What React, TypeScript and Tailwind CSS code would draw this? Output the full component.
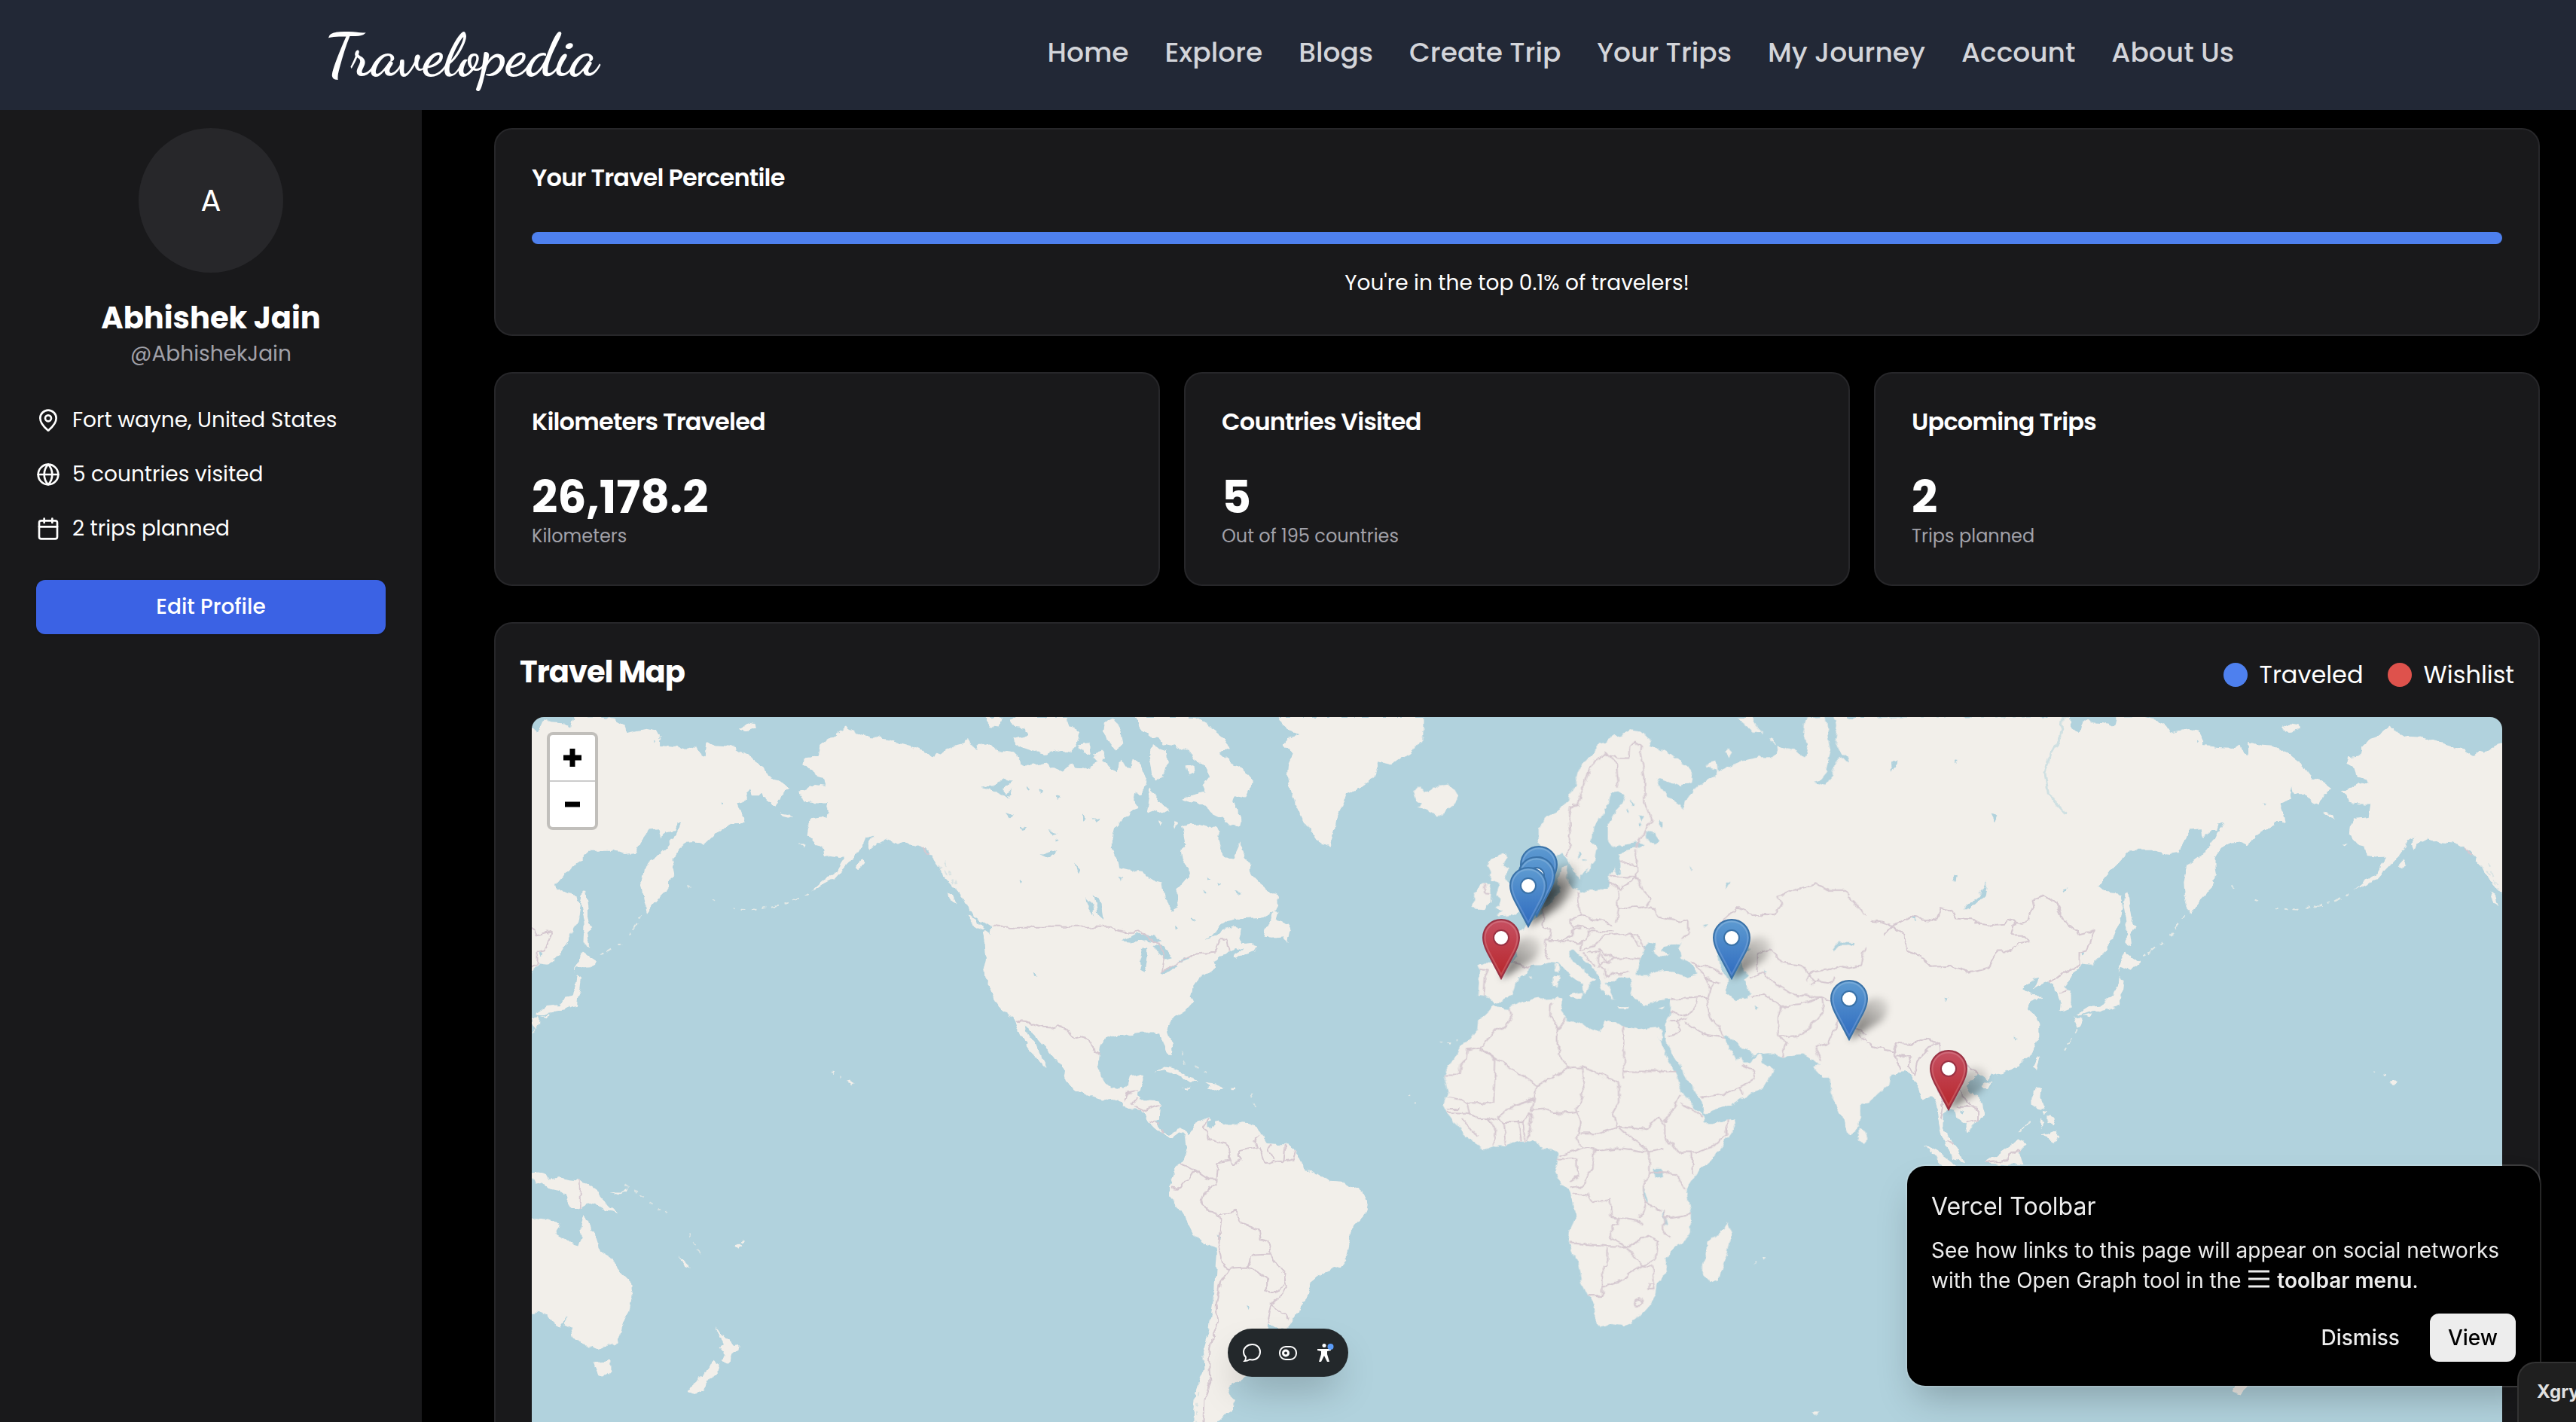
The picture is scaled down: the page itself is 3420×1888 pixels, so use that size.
import { Calendar, Globe, MapPin } from "lucide-react";

const navLinks = ["Home", "Explore", "Blogs", "Create Trip", "Your Trips", "My Journey", "Account", "About Us"];

const profileFacts = [
  { icon: MapPin, text: "Fort wayne, United States" },
  { icon: Globe, text: "5 countries visited" },
  { icon: Calendar, text: "2 trips planned" },
];

const stats = [
  { title: "Kilometers Traveled", value: "26,178.2", note: "Kilometers" },
  { title: "Countries Visited", value: "5", note: "Out of 195 countries" },
  { title: "Upcoming Trips", value: "2", note: "Trips planned" },
];

// tip of each pin, in map units
const pins = [
  { x: 1337, y: 251, kind: "traveled" },
  { x: 1334, y: 265, kind: "traveled" },
  { x: 1323, y: 279, kind: "traveled" },
  { x: 1287, y: 348, kind: "wishlist" },
  { x: 1593, y: 348, kind: "traveled" },
  { x: 1749, y: 429, kind: "traveled" },
  { x: 1881, y: 522, kind: "wishlist" },
];

const americasLand = [
  "M720,84 L735,90 748,95 758,100 766,106 775,97 785,100 795,92 803,88 812,78 826,74 834,66 840,82 852,90 858,80 866,86 880,82 886,90 905,96 918,98 930,112 938,122 950,126 968,124 985,122 990,130 1000,132 1012,138 1020,130 1028,124 1040,128 1050,130 1060,134 1072,128 1078,118 1070,108 1084,98 1092,104 1088,116 1100,122 1105,134 1116,140 1118,120 1126,112 1132,130 1142,132 1146,112 1158,120 1164,140 1172,156 1168,176 1160,186 1150,184 1146,200 1158,220 1140,228 1140,236 1125,246 1112,262 1106,290 1106,310 1112,326 1120,335 1122,352 1136,356 1160,360 1178,374 1190,384 1204,388 1206,404 1210,424 1222,446 1234,438 1232,414 1226,398 1240,388 1252,372 1250,350 1238,330 1236,312 1248,300 1244,282 1240,258 1256,254 1272,258 1288,264 1300,258 1308,270 1308,290 1314,312 1322,328 1334,330 1342,310 1348,295 1356,318 1366,345 1372,368 1388,386 1404,400 1418,410 1420,430 1414,448 1390,460 1350,462 1325,468 1310,480 1296,500 1282,510 1300,502 1316,490 1336,482 1350,486 1346,502 1352,518 1370,516 1386,522 1378,534 1356,542 1344,552 1338,548 1344,538 1356,530 1342,526 1330,534 1322,542 1306,546 1298,558 1302,574 1290,582 1274,586 1268,600 1258,616 1254,634 1258,648 1246,664 1232,674 1218,686 1212,700 1214,716 1222,742 1222,762 1214,764 1206,750 1200,730 1196,716 1184,712 1168,712 1150,714 1142,722 1128,718 1112,718 1096,726 1084,740 1082,756 1080,784 1084,806 1094,824 1104,834 1118,838 1130,834 1138,826 1142,810 1160,804 1168,806 1164,820 1158,836 1156,850 1160,862 1176,862 1192,864 1198,872 1196,892 1196,904 1188,908 1196,920 1202,930 1216,936 1224,928 1236,924 1246,932 1250,938 1256,928 1262,912 1274,906 1290,898 1294,902 1288,912 1296,924 1302,908 1310,904 1320,914 1340,914 1352,910 1368,912 1378,920 1384,932 1394,940 1404,956 1426,958 1440,958 1452,968 1460,984 1466,998 1468,1012 1486,1016 1512,1032 1521,1040 1546,1042 1566,1054 1585,1062 1591,1085 1585,1110 1572,1128 1559,1144 1556,1175 1551,1205 1539,1228 1521,1234 1497,1246 1484,1258 1480,1275 1478,1292 1466,1308 1456,1330 1446,1348 1436,1362 1420,1362 1402,1352 1398,1356 1412,1376 1410,1394 1395,1404 1376,1406 1376,1430 1368,1460 1345,1478 1328,1488 1326,1504 1340,1520 1336,1540 1320,1552 1308,1568 1310,1700 1255,1700 1262,1540 1265,1500 1272,1480 1282,1450 1280,1410 1290,1370 1294,1330 1300,1290 1302,1240 1304,1200 1302,1186 1286,1176 1262,1158 1254,1140 1244,1118 1230,1092 1216,1072 1216,1056 1222,1046 1218,1034 1224,1012 1236,1000 1244,986 1248,966 1246,946 1240,934 1232,932 1220,942 1206,936 1194,928 1186,920 1178,910 1170,890 1158,882 1146,878 1130,874 1124,866 1108,860 1090,862 1064,852 1040,840 1020,822 1016,808 1018,798 1006,780 992,760 978,744 966,728 960,712 950,704 942,698 944,712 954,728 964,744 972,760 980,774 986,788 978,786 966,770 950,750 944,744 946,734 934,722 926,700 922,682 906,670 896,662 886,644 878,620 866,598 864,570 868,550 866,510 862,492 868,488 878,496 876,480 862,470 846,456 836,446 830,430 816,408 806,392 790,372 780,350 768,330 756,312 740,302 720,296Z",
  // northern islands
  "M1150,20 L1262,20 1280,34 1300,48 1320,66 1330,90 1312,100 1330,118 1350,130 1374,160 1366,180 1356,198 1340,192 1336,206 1348,228 1350,262 1330,258 1314,240 1296,230 1280,212 1256,208 1240,200 1262,190 1284,184 1278,168 1290,150 1280,128 1262,110 1248,88 1236,92 1220,84 1204,80 1196,66 1180,64 1165,50 1156,36Z",
  "M925,82 L920,66 948,58 940,44 918,40 912,26 930,20 1020,20 1026,40 1046,52 1040,82 1030,96 1012,92 996,96 984,102 962,96 950,92Z",
  "M866,20 L898,20 892,42 878,40Z M1095,30 L1110,22 1124,50 1128,80 1112,92 1098,70 1092,50Z M1044,84 L1062,76 1066,98 1050,100Z M1072,98 L1088,92 1096,108 1084,112Z",
  "M1180,80 L1210,92 1212,120 1204,150 1190,160 1182,150 1180,130 1176,104Z M1178,176 L1196,206 1214,226 1200,234 1186,224 1172,230Z M1248,124 L1262,124 1264,142 1252,148Z M1222,246 l10,4 -6,16z M1196,250 l8,4 -6,6z",
  "M1422,20 L1697,20 1697,74 1665,100 1636,125 1611,118 1603,150 1582,172 1549,190 1540,220 1531,240 1525,280 1519,304 1504,296 1490,284 1470,250 1450,200 1438,150 1440,124 1448,104 1440,92 1430,80 1440,66 1460,60 1436,44Z",
  "M832,454 L850,464 868,484 860,486 844,474Z M796,404 L804,410 812,434 802,424Z",
  "M1414,446 L1422,448 1418,464 1430,470 1440,478 1444,492 1440,514 1428,502 1410,504 1392,502 1400,480 1408,462Z",
  "M1186,800 L1206,788 1222,790 1240,800 1256,812 1270,820 1256,822 1240,810 1220,802 1204,796Z M1282,822 L1300,824 1318,832 1300,840 1284,836 1290,830Z M1238,836 L1254,838 1250,842Z M1328,835 h12 v4 h-12z",
  // oceania
  "M-300,1130 L20,1122 45,1126 62,1130 52,1152 70,1164 84,1176 96,1180 102,1160 102,1136 108,1112 118,1132 120,1148 130,1158 136,1180 142,1196 158,1206 166,1224 180,1240 194,1256 199,1290 194,1320 184,1342 176,1370 170,1394 150,1400 132,1406 120,1400 104,1400 88,1382 84,1362 72,1356 74,1338 62,1358 50,1350 40,1334 20,1326 -300,1326Z",
  "M126,1436 L142,1434 156,1434 156,1456 146,1468 136,1466Z",
  "M356,1358 L372,1378 388,1398 400,1396 398,1410 388,1420 378,1440 368,1434 372,1416 364,1404 372,1396Z M352,1432 L366,1442 358,1460 344,1478 334,1496 322,1508 304,1502 312,1488 330,1468 344,1450Z",
  "M0,1020 L20,1018 38,1024 44,1036 60,1030 80,1036 98,1038 120,1048 136,1062 140,1076 156,1096 172,1112 150,1104 130,1090 118,1086 100,1098 84,1096 74,1088 78,1076 60,1060 44,1056 30,1042 14,1046 10,1034Z M158,1066 L176,1066 190,1056 194,1048 188,1062 172,1072Z",
  "M284,1206 L296,1214 308,1228 298,1224Z M392,1180 l8,-3 4,6 -6,6z M402,1172 l8,-6 2,4 -8,6z M606,820 l6,-2 6,6 -5,5z M592,806 l4,2 -3,2z M576,798 l5,1 -3,3z",
].join(" ");

const americasBorders =
  "M878,481 H1102 L1130,493 1160,492 1190,515 1205,545 1200,578 1230,562 1265,540 1300,537 1312,508 1325,508 1328,535 M925,686 L945,688 970,700 990,702 1005,696 1020,706 1035,725 1050,720 1065,735 1075,755 1083,760 M1128,862 L1134,844 1156,840 M1145,870 L1154,856 M1148,874 L1170,885 1196,872 M1180,908 L1196,912 M1202,922 V934 M1290,900 L1280,920 1290,945 1308,952 1325,955 1328,995 1308,1000 1305,1035 1290,1034 1265,1015 1236,1000 M1265,1015 L1254,1036 1240,1042 1230,1058 1220,1056 M1305,1035 L1305,1050 1280,1062 1275,1085 1285,1104 1305,1108 1305,1115 M1325,975 L1335,1004 1350,990 1350,972 1380,965 1376,950 1384,936 M1385,965 L1395,1000 1412,994 1430,996 1450,990 1454,972 M1410,958 L1403,974 1414,990 M1435,960 L1432,994 M1305,1115 L1342,1106 1350,1130 1385,1145 1388,1165 1402,1170 1405,1200 1370,1202 1365,1228 1325,1230 M1305,1115 L1315,1125 1308,1185 1318,1225 1328,1232 1312,1260 1304,1310 1306,1350 1296,1380 1290,1420 1292,1480 1282,1520 1280,1600 M1365,1228 L1400,1252 1400,1278 1412,1282 1435,1265 M1405,1200 L1420,1228 1434,1245 1438,1270 1408,1310 1440,1340 M1408,1310 L1400,1350 M98,1038 V1098";

const americasLakes =
  "M1126,512 L1150,496 1185,500 1198,516 1170,510 1150,515Z M1166,530 L1175,528 1172,560 1170,580 1162,575 1160,550Z M1182,520 L1205,525 1220,548 1207,552 1195,540Z M1198,580 L1228,562 1232,570 1205,582Z M1230,555 L1252,549 1250,556 1235,560Z M1070,408 L1085,425 1090,462 1078,450 1075,430Z M1058,415 L1068,432 1072,460 1062,440Z M862,175 L886,170 900,155 918,160 900,180 912,200 890,186Z M905,192 L918,176 914,194Z M970,322 L1000,312 1006,316 985,330Z M1032,340 L1046,356 1042,366Z M956,582 l6,2 2,8 -6,-4z M988,268 l14,4 -8,5z M905,230 l16,6 -8,6z M1050,235 l10,10 -6,6z M1070,238 l14,6 -8,6z M936,260 l8,4 -6,4z M1000,285 l6,4 -6,3z M1285,370 l8,8 -6,4z M1306,384 l8,4 -6,4z M1278,400 l10,4 -8,3z M1340,402 l12,2 -6,4z M1226,478 l6,5 -5,4z M1256,462 l10,3 -6,3z M932,380 l8,2 -5,4z M1120,370 l8,3 -5,4z M970,180 l8,6 -6,3z M948,170 l6,8 -6,2z M1000,190 l8,4 -6,6z M1288,906 l6,4 -1,16 -5,-6z M1360,1312 l8,2 -4,6z M1308,1156 l5,8 -3,4z";

const oldWorldLand = [
  "M510,262 L530,240 560,225 580,200 595,170 600,140 615,120 635,100 650,80 670,70 700,60 722,48 745,52 768,68 762,80 785,88 815,102 850,128 868,145 862,165 840,174 810,162 785,155 795,175 805,195 820,200 838,212 840,225 852,205 862,190 880,170 900,160 918,150 922,135 900,130 905,118 920,115 925,140 950,128 975,118 1000,112 1020,108 1050,108 1062,98 1060,82 1080,85 1105,95 1125,110 1135,100 1128,80 1122,50 1130,22 1175,20 1180,60 1186,90 1176,140 1160,158 1145,162 1175,170 1188,150 1195,120 1210,105 1225,120 1228,105 1205,95 1195,70 1200,40 1192,20 L1345,20 1345,800 1325,802 1320,825 1295,845 1275,865 1254,870 1254,905 1242,930 1228,936 1215,905 1198,870 1186,840 1184,810 1165,810 1145,790 1158,785 1140,770 1120,762 1075,766 1040,758 1020,760 1005,765 1000,752 975,745 960,730 945,715 938,718 948,740 960,758 968,775 975,765 980,780 1000,780 1012,765 1022,762 1030,780 1052,795 1040,820 1020,838 990,855 960,870 925,880 892,892 886,865 870,840 850,815 840,790 825,770 810,745 805,722 803,700 812,680 816,655 814,640 790,642 770,650 745,648 725,632 728,615 722,605 720,590 740,588 760,588 790,578 820,578 850,590 875,585 868,568 840,550 835,530 840,515 825,520 800,525 790,532 815,540 800,548 785,545 772,535 780,520 765,515 755,525 748,545 740,565 738,582 745,588 720,592 700,590 690,600 665,600 670,610 685,640 665,628 655,612 652,595 640,575 625,560 605,545 590,530 582,535 588,550 605,570 625,585 640,598 625,600 628,618 615,628 612,605 590,590 570,575 555,560 540,558 515,565 490,565 485,580 462,595 455,615 450,628 435,638 405,650 395,635 370,632 372,600 375,575 370,565 385,558 420,560 450,560 458,545 455,525 440,505 430,498 450,490 465,492 480,478 500,465 520,455 522,440 540,425 560,405 555,375 562,350 578,345 575,372 590,395 610,402 640,400 668,398 672,370 685,350 692,365 702,362 700,340 695,318 735,310 755,300 745,296 710,300 682,305 670,290 670,255 690,225 705,210 710,195 695,183 680,185 670,215 655,235 635,260 632,290 645,305 640,330 622,352 605,375 592,360 578,335 565,318 545,330 520,318 510,290Z",
  "M430,318 L440,330 425,345 440,350 435,370 450,395 460,415 468,425 475,440 450,455 415,458 425,445 410,440 425,420 410,410 418,385 398,380 400,360 392,345 405,330Z M375,390 L395,388 400,400 398,430 380,442 360,440 365,420 360,405Z",
  "M220,185 L232,172 245,185 262,178 275,170 300,168 315,178 325,195 312,215 290,228 272,234 250,222 230,218 240,208 225,200Z",
  "M970,20 L1005,20 1018,45 1028,58 1010,55 985,35Z M938,98 l10,-8 8,8 -8,12z M1042,68 l10,2 6,12 -10,-6z",
  "M580,628 L612,622 608,640 585,636Z M545,588 L556,590 552,612 543,610Z M547,562 L554,562 553,582 547,580Z M692,655 h26 v5 h-22z M785,660 l18,-5 -6,9z M484,592 l8,-3 -3,7z M620,360 l6,-14 3,3 -6,14z",
  "M405,655 L440,658 470,645 510,638 550,636 565,640 560,665 575,685 600,690 625,700 650,712 665,690 690,690 705,700 740,705 765,702 790,700 800,722 794,734 785,722 800,750 815,780 830,810 845,850 865,870 888,892 895,905 890,912 915,912 945,905 968,900 960,925 935,960 905,995 880,1015 862,1040 850,1060 855,1085 862,1110 862,1150 845,1175 825,1185 805,1205 810,1240 785,1260 782,1285 760,1320 735,1345 705,1355 680,1352 655,1362 640,1345 640,1325 625,1290 610,1260 605,1225 590,1195 578,1175 582,1145 597,1115 590,1085 582,1062 565,1045 548,1020 555,1000 558,980 545,970 520,970 510,955 495,952 465,950 430,962 410,962 385,970 360,955 335,935 320,915 300,890 290,872 300,845 292,805 310,775 330,745 350,728 368,705 370,685 390,670Z",
  "M948,1128 L958,1155 945,1200 928,1255 908,1262 890,1245 890,1220 900,1195 900,1170 920,1160 935,1148Z M1252,920 L1262,925 1271,945 1262,955 1252,948Z",
  "M1140,1545 l18,0 -6,8z M1008,1216 l5,2 -4,3z M1028,1206 l6,0 -4,4z M210,850 l5,2 -4,4z M224,866 l5,0 -3,4z M285,732 l6,3 -4,2z M298,738 l6,-3 -2,6z M320,728 l5,3 -4,3z",
].join(" ");

const oldWorldBorders = [
  "M440,658 L447,690 410,710 375,745 M375,745 L345,750 342,770 328,785 325,805 293,805 M375,745 L505,828 580,790 M505,828 L500,860 450,875 415,900 M375,750 L410,770 406,865 345,868 M540,645 L538,675 555,700 555,760 580,790 610,788 695,822 M570,680 L555,705 M706,700 L708,815 M708,798 L828,798 M695,822 L695,865 680,890 690,920 M610,788 L615,840 598,880 605,915 598,945 M500,860 L495,885 530,882 545,890 590,888 605,885 M495,890 L485,950 M415,900 L430,910 435,960 M462,905 L470,950 M475,905 L480,950 M430,910 H475 L492,890 M300,855 L330,860 345,870 350,890 300,888 M300,880 H325 M350,890 L370,900 395,900 410,925 M330,905 L350,920 M350,918 L370,940 M395,900 L415,905 M410,925 L405,960 M605,905 L598,945 M605,935 L650,935 700,918 760,925 785,900 800,915 M600,945 L610,965 560,985 M610,965 L650,972 700,966 760,975 M700,920 L730,950 765,975 800,968 M800,915 L800,935 830,975 880,975 915,962 945,935 V905 M800,910 L825,875 840,850 M840,870 L870,880 888,900 M865,975 L865,1025 M765,975 L765,1020 825,1022 850,1055",
  "M765,1020 L752,1045 755,1085 795,1105 M640,970 L635,1010 610,1050 585,1055 M555,992 L600,990 600,1030 580,1040 M590,1065 L625,1068 635,1085 675,1080 678,1115 740,1125 750,1135 M678,1115 L695,1118 692,1135 678,1135 680,1165 715,1182 M580,1175 L680,1182 715,1182 765,1160 M755,1085 L745,1120 M800,1105 L800,1150 812,1165 M800,1120 L862,1110 M765,1160 L785,1170 780,1210 750,1225 712,1185 M668,1185 L668,1225 658,1228 658,1292 625,1292 M658,1270 L690,1260 715,1245 750,1225 770,1225 778,1275 765,1275 766,1262 777,1262 M730,1305 l12,-10 8,8 -12,12z",
  "M575,325 L585,300 580,250 585,215 600,210 620,150 640,115 665,105 695,110 720,110 722,85 735,72 748,85 745,100 755,150 757,210 772,245 745,290 735,312 M665,100 L690,125 695,175 M735,315 L738,370 750,400 770,420 760,435 M700,340 L720,340 738,350 M675,368 L720,372 738,372 M670,380 L700,400 738,372 M692,400 L695,440 690,470 M600,402 L604,440 608,455 640,465 680,475 M695,440 L760,435 775,440 790,458 825,465 855,470 855,495 840,510 M520,440 L522,480 540,485 535,510 M580,465 L610,455 M580,462 L590,480 640,485 M525,510 L560,512 590,500 590,485 610,486 M525,510 L522,530 535,550 M560,512 L600,515 620,510 625,490 M625,490 L680,490 M600,530 L640,520 662,500 M662,500 L720,495 740,500 755,530 M720,495 L745,525 M610,535 L640,565 M622,535 H650 V565 M650,530 L680,550 745,550 M645,565 L665,575 665,590 M650,565 L680,550 M665,590 L680,582 700,585 720,578 M655,540 L672,562 M450,560 L490,570 M375,572 L395,575 388,590 385,635 M608,515 L600,530 M385,390 V404 L398,405",
  "M815,640 L900,635 905,615 895,590 870,558 M860,558 L905,570 935,585 M895,590 L915,600 905,615 M915,600 L930,605 M900,635 L908,680 940,725 M815,665 L840,675 870,665 875,640 M850,690 L890,715 940,725 M812,720 L835,710 830,690 850,680 M815,690 H830 M885,855 L935,848 980,832 985,850 M980,832 L1010,815 1005,795 980,785 M1000,632 L1035,630 1070,655 1062,680 1065,720 1085,735 1072,765 M1070,655 L1115,650 1165,635 1170,665 1140,700 1110,720 1065,722 M1015,580 L1015,540 1045,530 1075,560 1115,565 1130,580 1150,600 M1000,595 L1030,580 1050,600 1090,625 1130,635 1165,635 M930,470 L970,440 1010,455 1055,455 1070,430 1065,415 1100,400 1150,386 1185,400 1220,400 1260,455 1300,460 1327,478 M1130,600 L1140,580 1180,575 1210,565 1225,570 1255,565 1260,540 1290,500 1327,478 M1150,600 L1190,605 1195,590 M1140,608 L1160,595 M1165,635 L1200,650 1200,700 1175,735 1150,745 1160,775 M1200,610 L1195,640 M1225,695 L1255,710 1330,738 1345,740 M1250,715 L1280,740 1330,752 1335,740",
].join(" ");

const oldWorldLakes =
  "M925,530 L940,515 960,508 985,512 995,530 975,545 985,575 998,590 985,600 997,625 992,640 965,640 945,625 948,600 935,575 925,555Z M758,272 L775,275 786,290 775,300 762,290Z M786,245 l12,8 0,14 -8,-8z M776,1012 l18,0 4,18 -18,4z M752,1045 l5,18 8,25 -6,-4 -8,-25z M798,1105 l5,18 3,18 -5,-3 -5,-25z M1188,530 L1200,515 1240,516 1240,522 1205,522 1192,535Z M740,235 l14,6 -6,10z M740,250 l10,8 -8,4z M600,318 l8,6 -6,8z M612,330 l8,4 -6,4z M725,200 l6,10 -5,4z M715,220 l6,8 -5,3z M1008,655 l10,3 -6,8z M1450,634 l8,4 -5,5z M1030,575 l6,3 -4,5z M888,480 l14,-2 -6,6z M940,380 l10,0 -8,18z M860,350 l4,3 -3,4z";

const farEastLand = [
  "M-40,28 L450,28 455,60 475,82 490,40 510,48 545,50 560,60 566,28 630,28 665,40 685,55 695,80 740,68 765,75 775,100 775,125 810,130 850,132 865,118 872,150 882,155 885,110 905,118 945,122 985,155 1020,190 1035,225 1060,235 1085,260 1065,285 1055,318 1035,300 1020,280 995,280 990,258 985,275 988,295 960,310 970,345 975,375 950,375 915,400 880,445 870,435 840,438 820,455 805,490 805,520 808,545 795,560 795,585 770,620 755,645 742,668 732,620 728,570 735,515 765,485 790,450 805,425 822,375 812,375 808,400 790,405 775,420 770,395 745,398 725,440 715,470 690,475 660,465 600,465 580,490 555,525 520,580 535,595 550,605 575,610 580,640 572,700 560,740 535,795 505,835 482,832 468,850 455,880 445,895 440,905 455,935 455,975 428,990 430,950 412,920 410,900 400,890 375,905 362,915 378,880 370,878 340,905 338,920 350,928 362,935 385,938 360,960 350,980 370,1005 378,1030 378,1070 370,1100 350,1135 330,1165 290,1185 260,1195 255,1212 232,1190 215,1205 200,1225 215,1250 240,1285 248,1325 220,1350 205,1380 200,1355 180,1335 175,1310 158,1305 145,1320 145,1360 160,1400 180,1430 195,1480 170,1470 155,1430 140,1385 133,1340 130,1290 115,1260 95,1275 88,1240 70,1205 65,1185 20,1190 -40,1180Z",
  "M595,595 L598,640 605,700 612,715 598,730 602,772 588,765 590,700 582,640 588,600Z M585,790 L605,810 622,825 600,852 575,840 568,858 572,835Z M572,870 L585,880 582,915 575,940 572,970 555,975 530,985 500,990 478,1000 470,995 500,970 535,965 545,940 560,935 568,905Z M462,1008 L480,1005 480,1025 472,1042Z M485,1000 L510,992 500,1005Z",
  "M372,1135 L378,1140 370,1180 360,1170Z M245,1218 L265,1215 255,1240 242,1235Z M368,1235 L382,1240 380,1270 390,1305 375,1300 360,1290 360,1265Z M385,1310 l12,4 -4,12z M400,1325 l14,8 -6,24 -8,-10z M382,1340 l12,10 -4,14 -8,-8z M385,1390 L420,1370 427,1395 410,1418 395,1395Z M354,1340 l2,4 -24,38 -2,-4z",
  "M245,1480 L290,1440 325,1405 348,1418 330,1445 340,1490Z M102,1420 L130,1440 190,1500 150,1500Z M966,68 L985,48 1004,52 1006,66 985,76Z M1066,342 l20,4 10,12 -24,-8z",
  "M1225,60 L1245,78 1262,92 1300,95 1350,112 1385,125 1410,135 1410,442 1385,442 1350,440 1320,425 1300,440 1290,455 1282,462 1278,440 1290,415 1270,425 1262,450 1240,490 1215,525 1195,555 1165,575 1140,592 1165,562 1195,540 1210,505 1220,484 1200,485 1170,480 1165,450 1150,445 1128,410 1130,390 1140,360 1175,355 1180,310 1150,310 1125,305 1120,285 1108,272 1130,262 1150,245 1175,250 1170,230 1150,225 1145,205 1122,180 1125,160 1155,155 1160,125 1180,100 1200,92 1210,75Z M1245,515 L1262,490 1268,505 1255,528Z M1112,442 l14,0 -4,8z",
].join(" ");

const farEastBorders =
  "M-30,690 L0,695 22,708 50,740 55,790 100,810 115,842 160,840 205,858 255,842 275,795 295,795 330,765 355,758 345,740 312,738 322,695 305,690 290,705 260,710 235,705 215,685 175,680 165,658 140,650 130,695 90,685 70,678 22,708 0,740 M322,695 L335,700 352,690 365,650 362,625 390,612 420,635 438,695 470,720 475,738 512,725 495,790 475,795 475,835 440,860 402,892 M425,930 L445,918 M-40,1090 L0,1112 30,1115 30,1090 70,1092 110,1070 120,1090 135,1095 138,1120 M30,1095 L35,1160 40,1180 M35,1130 L70,1138 60,1160 75,1190 85,1140 110,1105 135,1095 M200,1160 L232,1190 M130,1240 L145,1300 140,1340 M180,1240 L210,1290 228,1300 228,1340 200,1350 M180,1300 H228 M152,1405 l20,14 M250,1480 L300,1470 315,1440 335,1440 M1385,128 V438 L1400,442 1420,475 1442,455 1465,500 1480,540 1500,555";

const farEastWater =
  "M252,560 L245,610 210,655 192,655 225,620 245,585Z M150,940 l8,2 -3,9z M318,1072 l6,4 -4,6z M190,1312 l6,4 -4,6z M760,104 l4,4 -3,6z M260,345 l18,5 -8,22z M170,545 l10,4 -2,18 -8,-8z M20,180 l16,-8 -14,34z M436,588 l14,-4 -12,14z M174,172 l6,2 -4,6z M70,680 l10,0 -4,14z M480,795 l10,0 -6,12z M920,310 l6,2 -4,5z";

function FarEast() {
  return (
    <g transform="translate(1794 -12) scale(.5485 .4082)">
      <path d={farEastLand} fill="#f2efea" />
      <path d={farEastWater} fill="#b1d2dd" />
      <path d="M435,28 L430,90 405,150 392,210 400,280 445,345" fill="none" stroke="#cfe0e2" strokeWidth="3" vectorEffect="non-scaling-stroke" />
      <path
        d="M730,672 L690,755 M680,765 L620,815 M1130,600 L1090,632 1010,656 950,652 M908,628 L900,624 M850,585 L836,568 M470,1045 L440,1120 M355,1345 L332,1380"
        fill="none"
        stroke="#e3e9e6"
        strokeWidth="2"
        strokeDasharray="5 9 9 6"
        vectorEffect="non-scaling-stroke"
      />
      <path d={farEastBorders} fill="none" stroke="#d5c8d0" strokeWidth="2" strokeLinejoin="round" vectorEffect="non-scaling-stroke" />
    </g>
  );
}

function Americas() {
  return (
    <g transform="translate(-6 -12) scale(.7015 .6046)">
      <path d={americasLand} fill="#f2efea" />
      <path d={americasLakes} fill="#b1d2dd" />
      <path
        d="M778,345 L800,370 812,400 M790,340 L812,385 M186,1046 L222,1076 M230,1086 L268,1112 M306,1152 L326,1198 M1236,752 L1246,780 M1262,786 L1290,804 M1372,846 L1378,884 M1272,1480 L1266,1568"
        fill="none"
        stroke="#d9e3e3"
        strokeWidth="2"
        strokeDasharray="6 7"
        vectorEffect="non-scaling-stroke"
      />
      <path d={americasBorders} fill="none" stroke="#d5c8d0" strokeWidth="2" strokeLinejoin="round" vectorEffect="non-scaling-stroke" />
    </g>
  );
}

function OldWorld() {
  return (
    <g transform="translate(1044 -12) scale(.574 .6046)">
      <path d={oldWorldLand} fill="#f2efea" />
      <path d={oldWorldLakes} fill="#b1d2dd" />
      <path d={oldWorldBorders} fill="none" stroke="#d5c8d0" strokeWidth="2" strokeLinejoin="round" vectorEffect="non-scaling-stroke" />
    </g>
  );
}

function Pin({ x, y, kind }: { x: number; y: number; kind: string }) {
  const red = kind === "wishlist";
  return (
    <g transform={`translate(${x - 25} ${y - 80})`}>
      <path
        d="M25 1C11.500 1 1 11.500 1 25c0 7 2.500 13 5.500 19L25 79l18.500-35C46.500 38 49 32 49 25 49 11.500 38.500 1 25 1z"
        fill={red ? "url(#pinRed)" : "url(#pinBlue)"}
        stroke={red ? "#9a3244" : "#3a72a8"}
        strokeWidth="2"
      />
      <path
        d="M25 3.500C13 3.500 3.500 13 3.500 25c0 7 2 12 5 18L25 74l16.500-31c3-6 5-11 5-18C46.500 13 37 3.500 25 3.500z"
        fill="none"
        stroke="#ffffff"
        strokeOpacity=".16"
        strokeWidth="2"
      />
      <circle cx="25" cy="25" r="10" fill="#fff" stroke={red ? "#9a3244" : "#3a72a8"} strokeWidth="2" />
    </g>
  );
}

function WorldMap() {
  return (
    <svg viewBox="0 0 2616 1000" preserveAspectRatio="xMidYMin slice" className="block aspect-[2616/1000] w-full" role="img" aria-label="World map">
      <defs>
        <linearGradient id="pinBlue" x1="0" y1="0" x2="0" y2="1">
          <stop offset="0" stopColor="#5e9bd1" />
          <stop offset="1" stopColor="#2e6abf" />
        </linearGradient>
        <linearGradient id="pinRed" x1="0" y1="0" x2="0" y2="1">
          <stop offset="0" stopColor="#c65062" />
          <stop offset="1" stopColor="#b7252a" />
        </linearGradient>
        <linearGradient id="pinShadow" gradientUnits="userSpaceOnUse" x1="0" y1="0" x2="46" y2="-54">
          <stop offset="0" stopColor="#000" stopOpacity=".6" />
          <stop offset="1" stopColor="#000" stopOpacity=".08" />
        </linearGradient>
        <filter id="coast" filterUnits="userSpaceOnUse" x="0" y="0" width="2616" height="1000">
          <feTurbulence type="fractalNoise" baseFrequency=".07" numOctaves="3" seed="4" />
          <feDisplacementMap in="SourceGraphic" scale="9" xChannelSelector="R" yChannelSelector="G" />
        </filter>
        <filter id="soft" x="-50%" y="-50%" width="200%" height="200%">
          <feGaussianBlur stdDeviation="5" />
        </filter>
      </defs>
      <rect width="2616" height="1000" fill="#b1d2dd" />
      <g filter="url(#coast)">
        <g transform="translate(-2048 0)">
          <FarEast />
        </g>
        <Americas />
        <OldWorld />
        <FarEast />
        <g transform="translate(2048 0)">
          <Americas />
        </g>
      </g>
      {pins.map((p, i) => (
        <path key={i} d="M0 0L18 -46Q32 -62 48 -54Q56 -42 44 -26Z" transform={`translate(${p.x} ${p.y})`} fill="url(#pinShadow)" filter="url(#soft)" />
      ))}
      {pins.map((p, i) => (
        <Pin key={i} {...p} />
      ))}
    </svg>
  );
}

function Header() {
  return (
    <header className="h-[146px] shrink-0 bg-[#222836]">
      <div className="mx-auto flex h-full max-w-[2560px] items-center justify-between pr-6">
        <a href="#" className="font-['Dancing_Script','Liberation_Serif',serif] text-[80px] leading-none font-bold text-white">
          Travelopedia
        </a>
        <nav className="flex gap-12 pb-1.5">
          {navLinks.map((link) => (
            <a key={link} href="#" className="text-[36px] leading-12 font-medium text-[#d3d5da]">
              {link}
            </a>
          ))}
        </nav>
      </div>
    </header>
  );
}

function Sidebar() {
  return (
    <aside className="w-[560px] shrink-0 bg-[#19191b] px-12 pt-6">
      <div className="mx-auto flex size-48 items-center justify-center rounded-full bg-[#27272a] text-[40px]">A</div>
      <div className="mt-8 text-center">
        <h2 className="text-[40px] leading-14 font-bold">Abhishek Jain</h2>
        <p className="text-[28px] leading-10 text-[#a1a1a9]">@AbhishekJain</p>
      </div>
      <ul className="mt-12 space-y-8 text-[28px] leading-10">
        {profileFacts.map(({ icon: Icon, text }) => (
          <li key={text} className="flex items-center gap-4">
            <Icon className="size-8" /> {text}
          </li>
        ))}
      </ul>
      <button className="mt-12 h-[72px] w-full rounded-xl bg-[#3b62e4] text-[28px] font-medium shadow">Edit Profile</button>
    </aside>
  );
}

function MapCard() {
  return (
    <section className="mt-12 rounded-3xl border-2 border-[#27272a] bg-[#19191b]">
      <div className="flex items-start justify-between px-8 pt-8 pb-7">
        <h2 className="text-[40px] leading-16 font-bold tracking-tight">Travel Map</h2>
        <div className="flex gap-8 pt-3 text-[32px] leading-12">
          <span className="flex items-center gap-4">
            <i className="size-8 rounded-full bg-[#4e80ee]" /> Traveled
          </span>
          <span className="flex items-center gap-4">
            <i className="size-8 rounded-full bg-[#de524c]" /> Wishlist
          </span>
        </div>
      </div>
      <div className="px-12">
        <div className="relative overflow-hidden rounded-2xl">
          <WorldMap />
          <div className="absolute top-5 left-5 w-[68px] overflow-hidden rounded-lg border-4 border-black/20 bg-white bg-clip-padding text-black">
            <button aria-label="Zoom in" className="flex h-[62px] w-full items-center justify-center border-b-2 border-[#ccc]">
              <svg viewBox="0 0 24 24" className="size-6">
                <path d="M12 0V24M0 12H24" stroke="currentColor" strokeWidth="7" />
              </svg>
            </button>
            <button aria-label="Zoom out" className="flex h-[60px] w-full items-center justify-center">
              <svg viewBox="0 0 24 24" className="size-6">
                <path d="M2 12H22" stroke="currentColor" strokeWidth="7" />
              </svg>
            </button>
          </div>
        </div>
      </div>
    </section>
  );
}

function Toolbar() {
  return (
    <div className="fixed bottom-[60px] left-1/2 flex h-16 w-40 -translate-x-1/2 items-center justify-between rounded-full bg-[#23282b] px-5 text-white shadow-2xl">
      <button aria-label="Comments">
        <svg viewBox="0 0 24 24" className="size-6" fill="none" stroke="currentColor" strokeWidth="2">
          <path d="M12.500 1C6 1 1 5.500 1 11c0 3 1 5 3 7 0 2-.5 4-1.500 5 3 0 5-1 6.500-2 1 .3 2 .4 3.500.4C18.500 21.400 23 17 23 11S18.500 1 12.500 1z" />
        </svg>
      </button>
      <button aria-label="Flags">
        <svg viewBox="0 0 24 24" className="size-6" fill="none" stroke="currentColor" strokeWidth="2">
          <rect x="1" y="4" width="22" height="17" rx="8" />
          <circle cx="9" cy="12.500" r="3.500" strokeWidth="3" />
        </svg>
      </button>
      <button aria-label="Accessibility">
        <svg viewBox="0 0 24 24" className="size-6 overflow-visible" fill="currentColor">
          <circle cx="12" cy="2.500" r="2.500" />
          <path d="M3 7h18v2l-5 1v4l3 10h-3l-4-8-4 8H5l3-10v-4L3 9z" />
          <circle cx="20.500" cy="4" r="4" fill="#5b9cf8" />
        </svg>
      </button>
    </div>
  );
}

function VercelCard() {
  return (
    <section className="fixed right-12 bottom-12 w-[840px] rounded-3xl bg-black p-8 font-['Inter',sans-serif] text-[#ededed] shadow-2xl ring-2 ring-white/15">
      <h3 className="text-[32px] leading-11">Vercel Toolbar</h3>
      <p className="mt-4 text-[28px] leading-10">
        See how links to this page will appear on social networks with the Open Graph tool in the{" "}
        <svg viewBox="0 0 28 24" className="mx-0.5 inline-block h-6 w-7 align-baseline" stroke="currentColor" strokeWidth="3">
          <path d="M0 2H28M0 12H28M0 22H28" />
        </svg>{" "}
        <b className="font-semibold">toolbar menu</b>.
      </p>
      <div className="mt-6 flex justify-end gap-6">
        <button className="h-16 px-4 text-[28px] font-medium">Dismiss</button>
        <button className="h-16 rounded-xl bg-[#ededed] px-6 text-[28px] font-medium text-black">View</button>
      </div>
    </section>
  );
}

export default function App() {
  return (
    <div className="flex h-screen flex-col overflow-hidden bg-black font-['Poppins','Inter',sans-serif] text-white">
      <Header />
      <div className="flex min-h-0 flex-1">
        <Sidebar />
        <main className="min-w-0 flex-1 overflow-hidden pt-6 pr-12 pl-24">
          <section className="rounded-3xl border-2 border-[#27272a] bg-[#19191b] p-12">
            <h2 className="text-[32px] leading-8 font-semibold tracking-tight">Your Travel Percentile</h2>
            <div className="mt-14 h-4 rounded-full bg-[#4e80ee]" />
            <p className="mt-8 text-center text-[28px] leading-10">You're in the top 0.1% of travelers!</p>
          </section>
          <div className="mt-12 grid grid-cols-3 gap-8">
            {stats.map((s) => (
              <section key={s.title} className="rounded-3xl border-2 border-[#27272a] bg-[#19191b] p-12">
                <h2 className="text-[32px] leading-8 font-semibold tracking-tight">{s.title}</h2>
                <p className="mt-12 text-[60px] leading-18 font-bold">{s.value}</p>
                <p className="text-[24px] leading-8 text-[#a1a1a9]">{s.note}</p>
              </section>
            ))}
          </div>
          <MapCard />
        </main>
      </div>
      <Toolbar />
      <VercelCard />
      <div className="fixed right-0 bottom-0 h-20 w-[78px] overflow-hidden rounded-tl-3xl border-t-2 border-l-2 border-[#333] bg-[#1f1f1f] pt-5 pl-6 font-['Inter',sans-serif] text-[24px] font-bold text-[#e0e0e0]">
        Xgry
      </div>
    </div>
  );
}
